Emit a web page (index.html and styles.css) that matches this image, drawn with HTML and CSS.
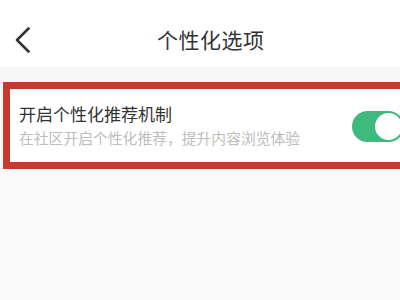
FILE: index.html
```html
<!DOCTYPE html>
<html lang="zh-CN">
<head>
<meta charset="utf-8">
<title>个性化选项</title>
<link rel="stylesheet" href="styles.css">
</head>
<body>
<div class="page">
  <header class="nav">
    <span class="back" aria-label="返回">
      <svg width="16" height="26" viewBox="0 0 16 26"><polyline points="13.5,1.5 2,13 13.5,24.5" fill="none" stroke="#333" stroke-width="2.6" stroke-linecap="round" stroke-linejoin="round"/></svg>
    </span>
    <h1 class="title">个性化选项</h1>
  </header>
  <main class="content">
    <section class="card">
      <div class="text">
        <div class="label">开启个性化推荐机制</div>
        <div class="desc">在社区开启个性化推荐，提升内容浏览体验</div>
      </div>
      <span class="switch"><span class="knob"></span></span>
    </section>
  </main>
</div>
</body>
</html>
```

FILE: styles.css
```css
html, body {
  margin: 0;
  padding: 0;
  background: #fafafa;
}
.page {
  width: 400px;
  height: 300px;
  overflow: hidden;
  background: #fafafa;
  font-family: "Noto Sans CJK SC", "Noto Sans", sans-serif;
}
.nav {
  height: 68px;
  background: #fff;
  display: flex;
  align-items: center;
  padding-left: 15px;
  box-sizing: border-box;
  border-bottom: 1px solid #f2f2f2;
}
.back {
  display: flex;
  width: 16px;
  height: 26px;
  margin-top: 12px;
}
.title {
  margin: 10px 0 0 126px;
  font-size: 21px;
  font-weight: 400;
  color: #333;
  letter-spacing: 0.5px;
  line-height: 28px;
}
.content {
  padding-top: 14px;
  background: #f7f7f7;
}
.card {
  margin-left: 3px;
  width: 430px;
  box-sizing: border-box;
  border: 7px solid #c9372d;
  background: #fff;
  display: flex;
  align-items: center;
  padding: 13px 22px 14px 9px;
}
.text {
  flex: 1;
  display: flex;
  flex-direction: column;
  gap: 2px;
}
.label {
  font-size: 17px;
  line-height: 24px;
  color: #333;
}
.desc {
  font-size: 14.8px;
  line-height: 20px;
  color: #bdbdbd;
}
.switch {
  width: 52px;
  height: 31px;
  border-radius: 16px;
  background: #3dba7c;
  display: flex;
  align-items: center;
  justify-content: flex-end;
  padding-right: 2px;
  box-sizing: border-box;
  margin-top: 2px;
}
.knob {
  width: 27px;
  height: 27px;
  border-radius: 50%;
  background: #fff;
}
```
